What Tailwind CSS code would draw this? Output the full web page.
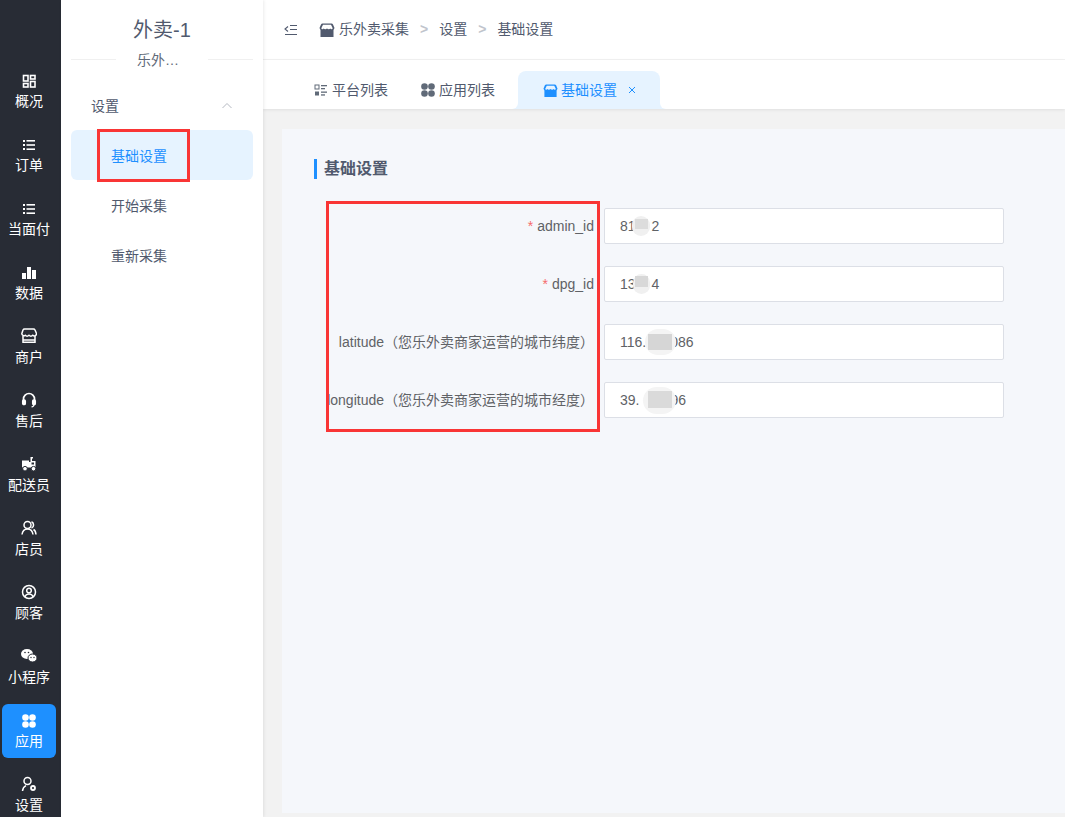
<!DOCTYPE html>
<html lang="zh">
<head>
<meta charset="utf-8">
<script src="https://cdn.jsdelivr.net/npm/@tailwindcss/browser@4"></script>
</head>
<body class="m-0 overflow-hidden bg-white font-['Liberation_Sans','Noto_Sans_CJK_SC',sans-serif]">
<div class="relative flex h-[817px] w-[1065px] overflow-hidden">
  <!-- dark rail -->
  <nav class="flex h-[817px] w-[61px] shrink-0 flex-col items-start gap-[10px] overflow-hidden bg-[#282c35] pl-[2px] pt-[64px] text-[14px] text-white">
    <a class="flex h-[54px] w-[54px] shrink-0 flex-col items-center justify-center gap-[3px] rounded-md">
      <svg class="mt-[2px] h-[14px] w-[14px]" viewBox="0 0 14 14" fill="none" stroke="white" stroke-width="1.6"><rect x="1.5" y="1.5" width="4.500" height="5.500"/><rect x="8.500" y="1.500" width="4.500" height="3.500"/><rect x="1.500" y="9.500" width="4.500" height="3.500"/><rect x="8.500" y="7.500" width="4.500" height="5.500"/></svg>
      <span class="leading-[20px]">概况</span>
    </a>
    <a class="flex h-[54px] w-[54px] shrink-0 flex-col items-center justify-center gap-[3px] rounded-md">
      <svg class="mt-[2px] h-[14px] w-[14px]" viewBox="0 0 14 14" fill="white"><rect x="1" y="2" width="2" height="2"/><rect x="4.500" y="2" width="8.500" height="1.600"/><rect x="1" y="6" width="2" height="2"/><rect x="4.500" y="6.200" width="8.500" height="1.600"/><rect x="1" y="10" width="2" height="2"/><rect x="4.500" y="10.400" width="8.500" height="1.600"/></svg>
      <span class="leading-[20px]">订单</span>
    </a>
    <a class="flex h-[54px] w-[54px] shrink-0 flex-col items-center justify-center gap-[3px] rounded-md">
      <svg class="mt-[2px] h-[14px] w-[14px]" viewBox="0 0 14 14" fill="white"><rect x="1" y="2" width="2" height="2"/><rect x="4.500" y="2" width="8.500" height="1.600"/><rect x="1" y="6" width="2" height="2"/><rect x="4.500" y="6.200" width="8.500" height="1.600"/><rect x="1" y="10" width="2" height="2"/><rect x="4.500" y="10.400" width="8.500" height="1.600"/></svg>
      <span class="leading-[20px] whitespace-nowrap">当面付</span>
    </a>
    <a class="flex h-[54px] w-[54px] shrink-0 flex-col items-center justify-center gap-[3px] rounded-md">
      <svg class="mt-[2px] h-[14px] w-[14px]" viewBox="0 0 14 14" fill="white"><rect x="0" y="7" width="4" height="6"/><rect x="5" y="1" width="4" height="12"/><rect x="10" y="4" width="4" height="9"/></svg>
      <span class="leading-[20px]">数据</span>
    </a>
    <a class="flex h-[54px] w-[54px] shrink-0 flex-col items-center justify-center gap-[3px] rounded-md">
      <svg class="h-[16px] w-[16px]" viewBox="0 0 16 16" fill="none" stroke="white" stroke-width="1.500"><path d="M3.500 1h9q1 0 1.500 1l1.500 3.500a2.200 2.200 0 0 1-3.700 1.800 2.800 2.800 0 0 1-3.800 0 2.800 2.800 0 0 1-3.800 0A2.200 2.200 0 0 1 .8 5.500L2 2q.5-1 1.500-1z"/><path d="M2 8v6.300h12V8"/><path d="M2 12h12"/></svg>
      <span class="leading-[20px]">商户</span>
    </a>
    <a class="flex h-[54px] w-[54px] shrink-0 flex-col items-center justify-center gap-[3px] rounded-md">
      <svg class="h-[16px] w-[16px]" viewBox="0 0 16 16" fill="none" stroke="white" stroke-width="1.700"><path d="M2.500 10V7a5.500 5.500 0 0 1 11 0v3"/><rect x="1.800" y="8" width="2.400" height="4.500" rx="1" fill="white"/><rect x="11.800" y="8" width="2.400" height="4.500" rx="1" fill="white"/><path d="M13 12.500c0 1.500-1 2.200-2.500 2.500" stroke-width="1.200"/></svg>
      <span class="leading-[20px]">售后</span>
    </a>
    <a class="flex h-[54px] w-[54px] shrink-0 flex-col items-center justify-center gap-[3px] rounded-md">
      <svg class="h-[16px] w-[16px]" viewBox="0 0 16 16" fill="white"><path d="M1 4.500h7V6h1.500V1H12v1.500h-1V5h3.500v6.500H1z"/><circle cx="4" cy="12.700" r="2.300" stroke="#282c35"/><circle cx="12.500" cy="12.700" r="2.300" stroke="#282c35"/><rect x="10.500" y="6.500" width="2.500" height="2" fill="#282c35"/></svg>
      <span class="leading-[20px] whitespace-nowrap">配送员</span>
    </a>
    <a class="flex h-[54px] w-[54px] shrink-0 flex-col items-center justify-center gap-[3px] rounded-md">
      <svg class="h-[16px] w-[16px]" viewBox="0 0 16 16" fill="none" stroke="white" stroke-width="1.500"><circle cx="6.500" cy="5" r="3.500"/><path d="M1 14.500c.5-3.500 2.500-5.500 5.500-5.500s5 2 5.500 5.500"/><path d="M10.500 1.700a3.500 3.500 0 0 1 0 6.400M12.500 9.500c1.500.8 2.300 2.500 2.500 5"/></svg>
      <span class="leading-[20px]">店员</span>
    </a>
    <a class="flex h-[54px] w-[54px] shrink-0 flex-col items-center justify-center gap-[3px] rounded-md">
      <svg class="h-[16px] w-[16px]" viewBox="0 0 16 16" fill="none" stroke="white" stroke-width="1.500"><circle cx="8" cy="8" r="6.500"/><circle cx="8" cy="6.500" r="2.300"/><path d="M3.800 13c.7-2 2.200-3 4.200-3s3.500 1 4.200 3"/></svg>
      <span class="leading-[20px]">顾客</span>
    </a>
    <a class="flex h-[54px] w-[54px] shrink-0 flex-col items-center justify-center gap-[3px] rounded-md">
      <svg class="h-[16px] w-[16px]" viewBox="0 0 16 16" fill="white"><ellipse cx="6" cy="6" rx="6" ry="5"/><ellipse cx="11.500" cy="10" rx="4.500" ry="4" stroke="#282c35"/><circle cx="10" cy="9.500" r=".7" fill="#282c35"/><circle cx="13" cy="9.500" r=".7" fill="#282c35"/><circle cx="4" cy="4.500" r=".8" fill="#282c35"/><circle cx="7.500" cy="4.500" r=".8" fill="#282c35"/></svg>
      <span class="leading-[20px] whitespace-nowrap">小程序</span>
    </a>
    <a class="flex h-[54px] w-[54px] shrink-0 flex-col items-center justify-center gap-[3px] rounded-md bg-[#1e90ff]">
      <svg class="mt-[2px] h-[14px] w-[14px]" viewBox="0 0 14 14" fill="white"><circle cx="3.500" cy="3.500" r="3.300"/><circle cx="10.500" cy="3.500" r="3.300"/><circle cx="3.500" cy="10.500" r="3.300"/><circle cx="10.500" cy="10.500" r="3.300"/></svg>
      <span class="leading-[20px]">应用</span>
    </a>
    <a class="flex h-[54px] w-[54px] shrink-0 flex-col items-center justify-center gap-[3px] rounded-md">
      <svg class="h-[16px] w-[16px]" viewBox="0 0 16 16" fill="none" stroke="white" stroke-width="1.500"><circle cx="6.500" cy="5" r="3.500"/><path d="M1.500 15c.3-2.500 1.500-4.300 3.500-5.300"/><circle cx="12" cy="12" r="2" stroke-width="1.800"/></svg>
      <span class="leading-[20px]">设置</span>
    </a>
  </nav>

  <!-- secondary menu -->
  <aside class="z-10 h-full w-[202px] shrink-0 bg-white shadow-[1px_0_3px_rgba(0,0,0,0.08)]">
    <div class="flex h-[44px] items-end justify-center text-[20px] leading-[28px] text-[#515a6e]">外卖-1</div>
    <div class="relative mx-[10px] mt-[15px] h-px bg-[#f0f0f0]">
      <span class="absolute left-[45px] top-[-9px] w-[92px] bg-white pl-[21px] text-[14px] leading-[20px] text-[#606a78] whitespace-nowrap">乐外…</span>
    </div>
    <div class="mt-[26px] px-[10px]">
      <div class="flex h-[40px] items-center justify-between px-[20px] text-[14px] text-[#515a6e]">
        <span>设置</span>
        <svg class="h-[10px] w-[12px]" viewBox="0 0 12 10" fill="none" stroke="#b5b9c2" stroke-width="1"><path d="M1.500 7L6 2.500 10.500 7"/></svg>
      </div>
      <div class="mt-[4px] flex h-[50px] items-center rounded-md bg-[#e6f3ff] pl-[40px] pt-[2px] text-[14px] text-[#1e90ff]">基础设置</div>
      <div class="flex h-[50px] items-center pl-[40px] pt-[2px] text-[14px] text-[#515a6e]">开始采集</div>
      <div class="flex h-[50px] items-center pl-[40px] pt-[2px] text-[14px] text-[#515a6e]">重新采集</div>
    </div>
  </aside>

  <!-- main -->
  <main class="flex h-full min-w-0 flex-1 flex-col bg-[#f2f2f2]">
    <header class="flex h-[60px] shrink-0 items-center border-b border-[#f2f2f2] bg-white pl-[21px] text-[14px] text-[#515a6e]">
      <svg class="h-[12px] w-[14px]" viewBox="0 0 14 12" fill="none" stroke="#515a6e" stroke-width="1.100"><path d="M4 2.500L1 5l3 2.500M6 1.500h7M6 5.500h7M1 10.500h12"/></svg>
      <svg class="ml-[21px] h-[16px] w-[16px]" viewBox="0 0 16 16"><path d="M3.500 1.500h9q1 0 1.500 1l1.500 3.500-1 2V15H1.500V8l-1-2L2 2.500q.5-1 1.500-1z" fill="#515a6e"/><path d="M4 2.800h8l1.700 3.500c-.3 1-1.700 1.200-2.400.2-.7 1-2.300 1-3.300 0-1 1-2.600 1-3.300 0-.7 1-2.100.8-2.400-.2z" fill="white"/></svg>
      <span class="ml-[4px]">乐外卖采集</span>
      <span class="mx-[11px] font-bold text-[#c0c4cc]">&gt;</span>
      <span>设置</span>
      <span class="mx-[11px] font-bold text-[#c0c4cc]">&gt;</span>
      <span>基础设置</span>
    </header>
    <div class="relative flex h-[49px] shrink-0 items-end bg-white pl-[51px] text-[14px] text-[#515a6e] shadow-[0_1px_3px_rgba(0,0,0,0.08)]">
      <div class="flex h-[38px] items-center gap-[4px]">
        <svg class="h-[14px] w-[14px]" viewBox="0 0 14 14" fill="#606a78"><rect x="1" y="2" width="4" height="4" fill="none" stroke="#606a78"/><rect x="7" y="2" width="6" height="1.300"/><rect x="7" y="5" width="4" height="1.300"/><rect x="1" y="8.500" width="4" height="4"/><rect x="7" y="8.500" width="6" height="1.300"/><rect x="7" y="11.300" width="4" height="1.300"/></svg>
        <span>平台列表</span>
      </div>
      <div class="ml-[33px] flex h-[38px] items-center gap-[4px]">
        <svg class="h-[14px] w-[14px]" viewBox="0 0 14 14" fill="#606a78"><circle cx="3.500" cy="3.500" r="3.300"/><circle cx="10.500" cy="3.500" r="3.300"/><circle cx="3.500" cy="10.500" r="3.300"/><circle cx="10.500" cy="10.500" r="3.300"/></svg>
        <span>应用列表</span>
      </div>
      <div class="relative ml-[23px] flex h-[38px] w-[142px] items-center rounded-t-[8px] bg-[#e6f3ff] pl-[25px] text-[#1e90ff]">
        <span class="absolute bottom-0 left-[-6px] h-[6px] w-[6px] bg-[#e6f3ff]"><span class="block h-full w-full rounded-br-[6px] bg-white"></span></span>
        <span class="absolute bottom-0 right-[-6px] h-[6px] w-[6px] bg-[#e6f3ff]"><span class="block h-full w-full rounded-bl-[6px] bg-white"></span></span>
        <svg class="h-[15px] w-[15px]" viewBox="0 0 16 16"><path d="M3.500 1.500h9q1 0 1.500 1l1.500 3.500-1 2V15H1.500V8l-1-2L2 2.500q.5-1 1.500-1z" fill="#1e90ff"/><path d="M4 2.800h8l1.700 3.500c-.3 1-1.700 1.200-2.400.2-.7 1-2.300 1-3.300 0-1 1-2.600 1-3.300 0-.7 1-2.100.8-2.400-.2z" fill="#e6f3ff"/></svg>
        <span class="ml-[3px]">基础设置</span>
        <svg class="ml-[11px] h-[8px] w-[8px]" viewBox="0 0 8 8" stroke="#1e90ff" stroke-width="1"><path d="M1 1l6 6M7 1L1 7"/></svg>
      </div>
    </div>
    <div class="min-h-0 flex-1 pb-[4px] pl-[19px] pt-[20px]">
      <section class="h-full bg-[#f5f7fb] pl-[32px] pt-[30px]">
        <h2 class="flex h-[20px] items-center border-l-[3px] border-[#1e90ff] pl-[7px] text-[16px] font-bold text-[#515a6e]">基础设置</h2>
        <form class="mt-[29px] flex w-[690px] flex-col gap-[22px] text-[14px] text-[#606266]">
          <div class="flex h-[36px] items-center">
            <label class="flex w-[290px] shrink-0 justify-end overflow-hidden whitespace-nowrap pr-[10px]"><span class="text-[#f56c6c]">*</span>&nbsp;admin_id</label>
            <div class="relative flex h-[36px] w-[400px] items-center rounded-[2px] border border-[#dcdfe6] bg-white pl-[15px]">81<span class="ml-[16px]">2</span>
              <span class="absolute left-[27px] top-[7px] h-[20px] w-[18px] rounded-full bg-[#f0f0f0]"></span>
              <span class="absolute left-[30px] top-[10px] h-[10px] w-[13px] bg-[#dcdcdc]"></span>
            </div>
          </div>
          <div class="flex h-[36px] items-center">
            <label class="flex w-[290px] shrink-0 justify-end overflow-hidden whitespace-nowrap pr-[10px]"><span class="text-[#f56c6c]">*</span>&nbsp;dpg_id</label>
            <div class="relative flex h-[36px] w-[400px] items-center rounded-[2px] border border-[#dcdfe6] bg-white pl-[15px]">13<span class="ml-[16px]">4</span>
              <span class="absolute left-[28px] top-[7px] h-[20px] w-[17px] rounded-full bg-[#f0f0f0]"></span>
              <span class="absolute left-[30px] top-[9px] h-[11px] w-[13px] bg-[#d8d8d8]"></span>
            </div>
          </div>
          <div class="flex h-[36px] items-center">
            <label class="flex w-[290px] shrink-0 justify-end overflow-hidden whitespace-nowrap pr-[10px]">latitude（您乐外卖商家运营的城市纬度）</label>
            <div class="relative flex h-[36px] w-[400px] items-center rounded-[2px] border border-[#dcdfe6] bg-white pl-[15px]">116.<span class="ml-[24px]">086</span>
              <span class="absolute left-[40px] top-[4px] h-[26px] w-[31px] rounded-full bg-[#f4f4f4]"></span>
              <span class="absolute left-[43px] top-[9px] h-[16px] w-[24px] bg-[#d6d6d6]"></span>
            </div>
          </div>
          <div class="flex h-[36px] items-center">
            <label class="flex w-[290px] shrink-0 justify-end overflow-hidden whitespace-nowrap pr-[10px]">longitude（您乐外卖商家运营的城市经度）</label>
            <div class="relative flex h-[36px] w-[400px] items-center rounded-[2px] border border-[#dcdfe6] bg-white pl-[15px]">39.<span class="ml-[31px]">96</span>
              <span class="absolute left-[38px] top-[4px] h-[27px] w-[33px] rounded-full bg-[#f4f4f4]"></span>
              <span class="absolute left-[43px] top-[8px] h-[17px] w-[24px] bg-[#dadada]"></span>
            </div>
          </div>
        </form>
      </section>
    </div>
  </main>

  <!-- red annotation boxes -->
  <div class="absolute left-[97px] top-[129px] z-20 h-[53px] w-[93px] border-[3px] border-[#f93535]"></div>
  <div class="absolute left-[326px] top-[201px] z-20 h-[231px] w-[274px] border-[3px] border-[#f93535]"></div>
</div>
</body>
</html>
